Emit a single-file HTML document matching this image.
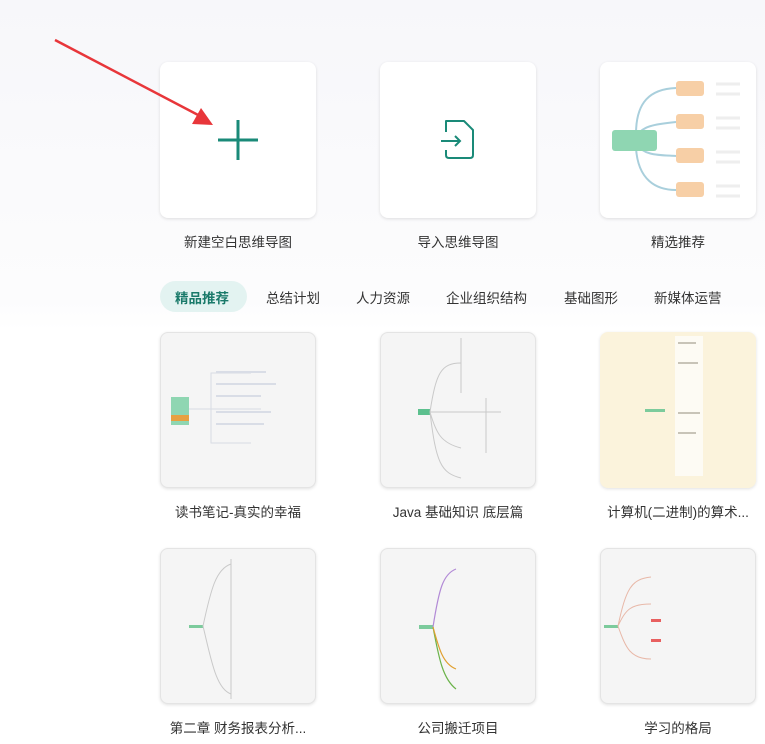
<!DOCTYPE html>
<html><head><meta charset="utf-8"><style>
body{margin:0;width:765px;height:744px;overflow:hidden;background:linear-gradient(#f7f7fa,#fcfcfd 300px,#fff 330px);font-family:"Liberation Sans","Noto Sans CJK SC",sans-serif;position:relative}
.card{position:absolute;width:156px;height:156px;background:#fff;border-radius:8px;box-shadow:0 1px 3px rgba(0,0,0,.12);overflow:hidden}
.t{background:#f5f5f5;border:1px solid #e4e4e4;box-sizing:border-box}
.lab{position:absolute;width:200px;text-align:center;font-size:13.5px;color:#333}
.tab{position:absolute;top:287px;font-size:13.5px;color:#333}
svg g{fill:none}
</style></head><body>
<div class="card" style="left:160px;top:62px"><svg width="156" height="156"><path d="M78 58v40M58 78h40" stroke="#1a8a78" stroke-width="3"/></svg></div>
<div class="card" style="left:380px;top:62px"><svg width="156" height="156"><path d="M66 70V59H84L93 68V93Q93 96 90 96H69Q66 96 66 93V88" fill="none" stroke="#1a8a78" stroke-width="2" stroke-linejoin="round"/><path d="M61 79H80M75 74L80 79L75 84" fill="none" stroke="#1a8a78" stroke-width="2"/></svg></div>
<div class="card" style="left:600px;top:62px"><svg width="156" height="156">
<path d="M36 72C36 40 50 27 76 26M36 76C40 64 56 62 76 60M36 82C44 94 60 93 76 94M36 86C38 118 56 128 76 128" fill="none" stroke="#a9cfdc" stroke-width="2"/>
<rect x="12" y="68" width="45" height="21" rx="3" fill="#8fd6b2"/>
<rect x="76" y="19" width="28" height="15" rx="3" fill="#f7cfa6"/><rect x="76" y="52" width="28" height="15" rx="3" fill="#f7cfa6"/><rect x="76" y="86" width="28" height="15" rx="3" fill="#f7cfa6"/><rect x="76" y="120" width="28" height="15" rx="3" fill="#f7cfa6"/>
<path d="M116 22h24M116 32h24M116 56h24M116 66h24M116 90h24M116 100h24M116 124h24M116 134h24" stroke="#eee" stroke-width="3"/></svg></div>
<div class="lab" style="left:138px;top:231px">新建空白思维导图</div>
<div class="lab" style="left:358px;top:231px">导入思维导图</div>
<div class="lab" style="left:578px;top:231px">精选推荐</div>
<svg style="position:absolute;left:0;top:0" width="240" height="140"><path d="M55 40L200 116" stroke="#e8363a" stroke-width="2.5"/><path d="M213 125L192 124L201 108Z" fill="#e8363a"/></svg>
<div style="position:absolute;left:160px;top:281px;width:87px;height:31px;border-radius:16px;background:#e3f3f1"></div>
<div class="tab" style="left:175px;color:#1a7a6a;font-weight:bold">精品推荐</div>
<div class="tab" style="left:266px">总结计划</div>
<div class="tab" style="left:356px">人力资源</div>
<div class="tab" style="left:446px">企业组织结构</div>
<div class="tab" style="left:564px">基础图形</div>
<div class="tab" style="left:654px">新媒体运营</div>
<div class="card t" style="left:160px;top:332px"><svg width="156" height="156"><rect x="10" y="64" width="18" height="28" fill="#8fd6b2"/><rect x="10" y="82" width="18" height="6" fill="#e8a040"/><g stroke="#d8dce4"><path d="M28 76H50M50 76V40H90M50 76V110H90M50 76H100"/></g><rect x="55" y="38" width="50" height="2" fill="#d9dde6"/><rect x="55" y="50" width="60" height="2" fill="#d9dde6"/><rect x="55" y="62" width="45" height="2" fill="#d9dde6"/><rect x="55" y="78" width="55" height="2" fill="#d9dde6"/><rect x="55" y="90" width="48" height="2" fill="#d9dde6"/></svg></div>
<div class="card t" style="left:380px;top:332px"><svg width="156" height="156"><rect x="37" y="76" width="12" height="6" fill="#5cc08e"/><g stroke="#c9c9c9"><path d="M49 79C55 40 60 30 80 30M49 79H120M49 79C55 100 60 110 80 115M49 79C55 130 60 140 80 145"/><path d="M80 5V60M105 65V120"/></g></svg></div>
<div class="card" style="left:600px;top:332px;background:#fbf3dc"><svg width="156" height="156"><rect x="45" y="77" width="20" height="3" fill="#7ccb9c"/><rect x="75" y="4" width="28" height="140" fill="#fdfbf4"/><rect x="78" y="10" width="18" height="2" fill="#c8c4b8"/><rect x="78" y="30" width="20" height="2" fill="#c8c4b8"/><rect x="78" y="80" width="22" height="2" fill="#c8c4b8"/><rect x="78" y="100" width="18" height="2" fill="#c8c4b8"/></svg></div>
<div class="lab" style="left:138px;top:501px">读书笔记-真实的幸福</div>
<div class="lab" style="left:358px;top:501px">Java 基础知识 底层篇</div>
<div class="lab" style="left:578px;top:501px">计算机(二进制)的算术...</div>
<div class="card t" style="left:160px;top:548px"><svg width="156" height="156"><rect x="28" y="76" width="14" height="3" fill="#7ccb9c"/><g stroke="#c9c9c9"><path d="M42 77C50 40 55 20 70 15M42 77C50 110 55 140 70 145M70 10V150"/></g></svg></div>
<div class="card t" style="left:380px;top:548px"><svg width="156" height="156"><rect x="38" y="76" width="14" height="4" fill="#7ccb9c"/><g stroke-width="1.2"><path d="M52 78C58 40 62 25 75 20" stroke="#b28ad6"/><path d="M52 78C58 110 62 130 75 140" stroke="#6bb34a"/><path d="M52 78C58 100 62 115 75 120" stroke="#e0a030"/></g></svg></div>
<div class="card t" style="left:600px;top:548px"><svg width="156" height="156"><rect x="3" y="76" width="14" height="3" fill="#7ccb9c"/><g stroke="#e8b8a8"><path d="M17 77C25 40 30 30 50 28M17 77C25 60 30 55 50 55M17 77C25 100 30 110 50 110"/></g><rect x="50" y="70" width="10" height="3" fill="#e86060"/><rect x="50" y="90" width="10" height="3" fill="#e86060"/></svg></div>
<div class="lab" style="left:138px;top:717px">第二章 财务报表分析...</div>
<div class="lab" style="left:358px;top:717px">公司搬迁项目</div>
<div class="lab" style="left:578px;top:717px">学习的格局</div>
</body></html>
